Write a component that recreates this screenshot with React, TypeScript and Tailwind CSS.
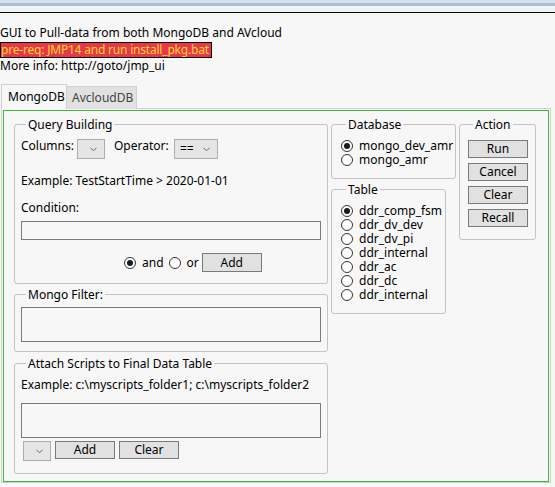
import React from 'react'

const font = { fontFamily: '"Noto Sans", "Open Sans", sans-serif' }

function Radio({ checked, label }: { checked?: boolean; label: string }) {
  return (
    <div className="flex items-center h-[14px]">
      <span className="w-[12px] h-[12px] rounded-full border border-[#333] bg-white flex items-center justify-center shrink-0">
        {checked && <span className="w-[6px] h-[6px] rounded-full bg-[#1a1a1a]" />}
      </span>
      <span className="ml-[6px] leading-[14px] whitespace-nowrap">{label}</span>
    </div>
  )
}

function Btn({ label, className = '' }: { label: string; className?: string }) {
  return (
    <button className={`h-[18px] w-[60px] border border-[#7a7a7a] bg-[#e1e1e1] text-black text-[12px] leading-[16px] ${className}`}>
      {label}
    </button>
  )
}

function Combo({ value, className = '' }: { value?: string; className?: string }) {
  return (
    <div className={`h-[20px] border border-[#adadad] bg-[#e5e5e5] flex items-center ${className}`}>
      <span className="flex-1 pl-[5px] text-[12px] leading-[18px]">{value}</span>
      <svg width="7" height="5" viewBox="0 0 7 5" className="mr-[7px] mt-[1px]">
        <path d="M0.5 0.8 L3.5 3.8 L6.5 0.8" fill="none" stroke="#666" strokeWidth="1" />
      </svg>
    </div>
  )
}

function Group({ title, className = '', children }: { title: string; className?: string; children: React.ReactNode }) {
  return (
    <fieldset className={`border border-[#c4c4c4] rounded-[3px] ${className}`}>
      <legend className="ml-[5px] px-[2px] text-[12px] leading-[15px]">{title}</legend>
      {children}
    </fieldset>
  )
}

export default function App() {
  return (
    <div className="w-[555px] h-[487px] bg-[#f7f7f7] text-black text-[12px] overflow-hidden" style={font}>
      {/* window chrome */}
      <div className="h-[3px] bg-[#d6e1ee]" />
      <div className="h-[3px] bg-[#a9bfd8]" />
      <div className="h-[6px] bg-[#f3f3f3]" />
      <div className="h-px bg-black" />

      <div className="pt-[12px] leading-[15px]">
        <div>GUI to Pull-data from both MongoDB and AVcloud</div>
        <div className="mt-[2px] flex">
          <span className="h-[16px] bg-[#e8374a] border border-black text-[#ffd82a] leading-[14px] whitespace-nowrap tracking-[-0.2px] pr-[2px]">
            pre-req: JMP14 and run install_pkg.bat
          </span>
        </div>
        <div>More info: http://goto/jmp_ui</div>
      </div>

      {/* tabs */}
      <div className="mt-[11px] flex items-end pl-px h-[25px]">
        <div className="w-[66px] h-[25px] bg-[#f7f7f7] border border-b-0 border-[#d0d0d0] flex items-center pl-[6px] relative z-10">
          MongoDB
        </div>
        <div className="w-[70px] h-[23px] bg-[#e1e1e1] border border-b-0 border-l-0 border-[#d0d0d0] flex items-center pl-[5px] text-[#444]">
          AvcloudDB
        </div>
      </div>

      {/* tab panel */}
      <div className="ml-px w-[550px] border border-[#d0d0d0] -mt-px pt-px px-px">
        <div className="border border-[#3cb93c] h-[372px] pt-[6px] pl-[10px] flex gap-[3px]">
          {/* left column */}
          <div className="w-[314px] flex flex-col">
            <Group title="Query Building" className="px-[6px] pb-[11px]">
              <div className="mt-[7px] flex items-start h-[20px]">
                <span className="w-[56px] -mt-px leading-[15px]">Columns:</span>
                <Combo className="w-[28px]" />
                <span className="ml-[9px] w-[60px] -mt-px leading-[15px]">Operator:</span>
                <Combo className="w-[44px]" value="==" />
              </div>
              <div className="mt-[14px] leading-[15px]">Example: TestStartTime &gt; 2020-01-01</div>
              <div className="mt-[12px] leading-[15px]">Condition:</div>
              <div className="mt-[6px] h-[19px] border border-[#7a7a7a]" />
              <div className="mt-[13px] ml-[103px] flex items-center h-[19px]">
                <Radio checked label="and" />
                <span className="ml-[5px]" />
                <Radio label="or" />
                <Btn label="Add" className="ml-[3px] h-[19px]" />
              </div>
            </Group>

            <Group title="Mongo Filter:" className="mt-[3px] px-[6px] pb-[9px]">
              <div className="mt-[5px] h-[35px] border border-[#7a7a7a]" />
            </Group>

            <Group title="Attach Scripts to Final Data Table" className="mt-[4px] px-[6px] pb-[12px]">
              <div className="mt-[6px] leading-[15px]">Example: c:\myscripts_folder1; c:\myscripts_folder2</div>
              <div className="mt-[11px] h-[35px] border border-[#7a7a7a]" />
              <div className="mt-[3px] flex items-start">
                <Combo className="ml-[2px] w-[28px]" />
                <Btn label="Add" className="ml-[4px]" />
                <Btn label="Clear" className="ml-[4px]" />
              </div>
            </Group>
          </div>

          {/* middle column */}
          <div className="flex flex-col">
            <Group title="Database" className="w-[125px] pl-[9px] pb-[11px]">
              <div className="mt-[7px] flex flex-col">
                <Radio checked label="mongo_dev_amr" />
                <Radio label="mongo_amr" />
              </div>
            </Group>
            <Group title="Table" className="mt-[3px] w-[115px] pl-[9px] pb-[11px]">
              <div className="mt-[7px] flex flex-col">
                <Radio checked label="ddr_comp_fsm" />
                <Radio label="ddr_dv_dev" />
                <Radio label="ddr_dv_pi" />
                <Radio label="ddr_internal" />
                <Radio label="ddr_ac" />
                <Radio label="ddr_dc" />
                <Radio label="ddr_internal" />
              </div>
            </Group>
          </div>

          {/* action column */}
          <div>
            <Group title="Action" className="w-[77px] pl-[8px] pb-[12px]">
              <div className="mt-[8px] flex flex-col gap-[5px]">
                <Btn label="Run" />
                <Btn label="Cancel" />
                <Btn label="Clear" />
                <Btn label="Recall" />
              </div>
            </Group>
          </div>
        </div>
      </div>
    </div>
  )
}
